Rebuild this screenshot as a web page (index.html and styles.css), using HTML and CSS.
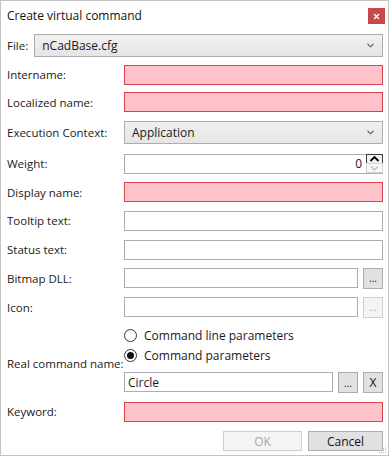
FILE: index.html
```html
<!DOCTYPE html>
<html lang="en">
<head>
  <meta charset="UTF-8">
  <title>Create virtual command</title>
  <link rel="stylesheet" href="styles.css">
</head>
<body>
  <div class="dialog">
    <div class="titlebar">
      <span class="title">Create virtual command</span>
      <span class="close">
        <svg width="7" height="7" viewBox="0 0 7 7"><path d="M1 1L6 6M6 1L1 6" stroke="#fff" stroke-width="1.3"/></svg>
      </span>
    </div>

    <div class="file-row">
      <span class="label">File:</span>
      <div class="combo">
        <span>nCadBase.cfg</span>
        <svg class="chev" width="7" height="5" viewBox="0 0 7 5"><path d="M0.5 0.8L3.5 3.8L6.5 0.8" stroke="#555" stroke-width="1.1" fill="none"/></svg>
      </div>
    </div>

    <div class="form">
      <div class="row r-intern">
        <span class="label">Intername:</span>
        <div class="box invalid"></div>
      </div>
      <div class="row r-local">
        <span class="label">Localized name:</span>
        <div class="box invalid"></div>
      </div>
      <div class="row r-exec">
        <span class="label">Execution Context:</span>
        <div class="combo">
          <span>Application</span>
          <svg class="chev" width="7" height="5" viewBox="0 0 7 5"><path d="M0.5 0.8L3.5 3.8L6.5 0.8" stroke="#555" stroke-width="1.1" fill="none"/></svg>
        </div>
      </div>
      <div class="row r-weight">
        <span class="label">Weight:</span>
        <div class="box spin-box">
          <span class="num">0</span>
          <svg class="spin" width="17" height="19" viewBox="0 0 17 19">
            <rect x="0.5" y="0.5" width="16" height="9" fill="#f2f2f2" stroke="#3c3c3c"/>
            <path d="M4.5 7L8.5 3L12.5 7" stroke="#000" stroke-width="1.8" fill="none"/>
            <rect x="0.5" y="9.5" width="16" height="9" fill="#f7f7f7" stroke="#d4d4d4"/>
            <path d="M5 12.5L8.5 16L12 12.5" stroke="#c4c4c4" stroke-width="1.3" fill="none"/>
          </svg>
        </div>
      </div>
      <div class="row r-display">
        <span class="label">Display name:</span>
        <div class="box invalid"></div>
      </div>
      <div class="row r-tooltip">
        <span class="label">Tooltip text:</span>
        <div class="box"></div>
      </div>
      <div class="row r-status">
        <span class="label">Status text:</span>
        <div class="box"></div>
      </div>
      <div class="row r-bitmap">
        <span class="label">Bitmap DLL:</span>
        <div class="with-btn">
          <div class="box"></div>
          <button class="btn small">...</button>
        </div>
      </div>
      <div class="row r-icon">
        <span class="label">Icon:</span>
        <div class="with-btn">
          <div class="box"></div>
          <button class="btn small disabled">...</button>
        </div>
      </div>

      <div class="command">
        <span class="label cmd-label">Real command name:</span>
        <div class="cmd-right">
          <div class="radio-row">
            <span class="radio"></span>
            <span>Command line parameters</span>
          </div>
          <div class="radio-row">
            <span class="radio checked"></span>
            <span>Command parameters</span>
          </div>
          <div class="with-btn circle-row">
            <div class="box text">Circle</div>
            <button class="btn small">...</button>
            <button class="btn small x">X</button>
          </div>
        </div>
      </div>

      <div class="row r-keyword">
        <span class="label">Keyword:</span>
        <div class="box invalid"></div>
      </div>
    </div>

    <div class="footer">
      <button class="btn wide disabled">OK</button>
      <button class="btn wide cancel">Cancel</button>
      <svg class="grip" width="9" height="9" viewBox="0 0 9 9">
        <g fill="#b8b8b8">
          <rect x="7" y="1" width="1" height="1"/>
          <rect x="5" y="3" width="1" height="1"/><rect x="7" y="3" width="1" height="1"/>
          <rect x="3" y="5" width="1" height="1"/><rect x="5" y="5" width="1" height="1"/><rect x="7" y="5" width="1" height="1"/>
          <rect x="1" y="7" width="1" height="1"/><rect x="3" y="7" width="1" height="1"/><rect x="5" y="7" width="1" height="1"/><rect x="7" y="7" width="1" height="1"/>
        </g>
      </svg>
    </div>
  </div>
</body>
</html>
```

FILE: styles.css
```css
* { box-sizing: border-box; }
body {
  margin: 0;
  font-family: 'Open Sans', 'Noto Sans', sans-serif;
  font-size: 11.5px;
  color: #1a1a1a;
  background: #fff;
}
.dialog {
  width: 389px;
  height: 456px;
  border: 1px solid #c4c4c4;
  background: #fff;
  position: relative;
}
.titlebar {
  height: 29px;
  display: flex;
  align-items: center;
  justify-content: space-between;
  padding: 0 3px 0 6px;
}
.title {
  font-size: 12px;
  color: #111;
  margin-top: -1px;
}
.close {
  width: 17px;
  height: 16px;
  background: #c9494b;
  display: flex;
  align-items: center;
  justify-content: center;
  margin-top: 1px;
}
.file-row {
  height: 30px;
  display: flex;
  align-items: center;
  gap: 6px;
  padding: 0 5px 0 6px;
}
.file-row .combo {
  flex: 1;
}
.label {
  white-space: nowrap;
}
.combo {
  height: 23px;
  border: 1px solid #adadad;
  background: linear-gradient(#f0f0f0, #e5e5e5);
  display: flex;
  align-items: center;
  justify-content: space-between;
  padding: 0 8px 0 7px;
  font-size: 12px;
}
.form {
  padding: 0 5px 0 6px;
}
.row {
  display: grid;
  grid-template-columns: 117px 1fr;
  align-items: center;
}
.r-intern { height: 29px; }
.r-local { height: 26px; }
.r-exec { height: 34px; }
.r-weight { height: 29px; }
.r-display { height: 28px; }
.r-tooltip { height: 29px; }
.r-status { height: 29px; }
.r-bitmap { height: 28px; }
.r-icon { height: 30px; }
.r-keyword { height: 33px; }
.box {
  height: 20px;
  border: 1px solid #abadb3;
  background: #fff;
}
.box.invalid {
  background: #ffc2cb;
  border-color: #d7424d;
}
.box.text {
  display: flex;
  align-items: center;
  padding-left: 3px;
  font-size: 12px;
}
.spin-box {
  display: flex;
  align-items: center;
  justify-content: flex-end;
  padding-right: 0;
  height: 20px;
}
.num {
  font-size: 12px;
  margin-right: 4px;
}
.spin {
  display: block;
  margin-right: -1px;
}
.with-btn {
  display: flex;
  align-items: center;
  gap: 5px;
}
.with-btn .box {
  flex: 1;
}
.btn {
  font-family: inherit;
  font-size: 12px;
  color: #111;
  background: #e1e1e1;
  border: 1px solid #adadad;
  padding: 0;
  margin: 0;
}
.btn.small {
  width: 20px;
  height: 21px;
  font-size: 10px;
  line-height: 1;
}
.btn.x {
  font-size: 12px;
}
.btn.disabled {
  background: #f4f4f4;
  border-color: #cfcfcf;
  color: #a8a8a8;
}
.command {
  display: grid;
  grid-template-columns: 117px 1fr;
  align-items: center;
  padding-top: 3px;
}
.cmd-label {
  margin-top: 6px;
}
.cmd-right {
  display: flex;
  flex-direction: column;
}
.radio-row {
  height: 20px;
  display: flex;
  align-items: center;
  gap: 7px;
  font-size: 12px;
}
.radio {
  width: 13px;
  height: 13px;
  border: 1px solid #333;
  border-radius: 50%;
  background: #fff;
  display: flex;
  align-items: center;
  justify-content: center;
}
.radio.checked::after {
  content: '';
  width: 7px;
  height: 7px;
  border-radius: 50%;
  background: #111;
}
.circle-row {
  height: 30px;
  padding-top: 7px;
  align-items: flex-start;
}
.footer {
  display: flex;
  justify-content: flex-end;
  gap: 6px;
  padding: 3px 5px 0 0;
}
.btn.wide {
  width: 79px;
  height: 20px;
}
.btn.cancel {
  width: 75px;
}
.grip {
  position: absolute;
  right: 1px;
  bottom: 1px;
}
```
